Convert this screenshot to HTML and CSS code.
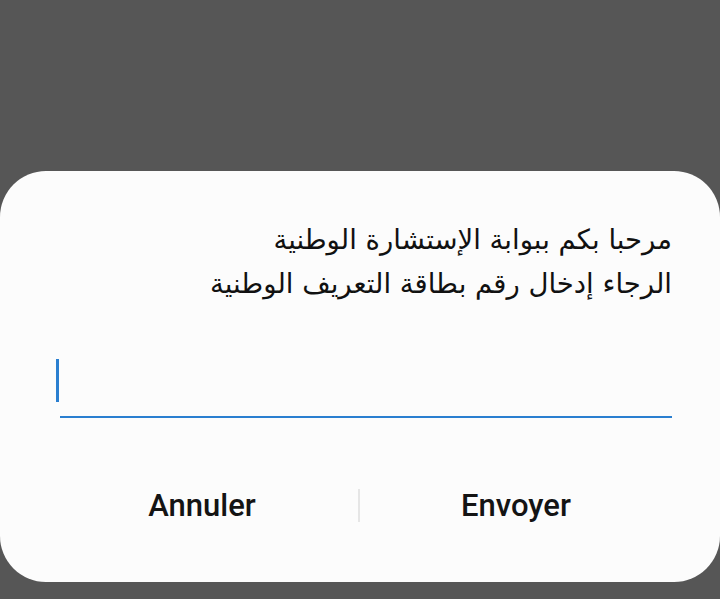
FILE: index.html
```html
<!DOCTYPE html>
<html lang="fr">
<head>
  <meta charset="UTF-8" />
  <title>Portail</title>
  <link rel="stylesheet" href="styles.css">
</head>
<body>
  <div class="dialog">
    <div class="message" dir="rtl" lang="ar">
      <div>مرحبا بكم ببوابة الإستشارة الوطنية</div>
      <div>الرجاء إدخال رقم بطاقة التعريف الوطنية</div>
    </div>
    <div class="field">
      <span class="caret"></span>
    </div>
    <div class="actions">
      <button class="btn">Annuler</button>
      <span class="sep"></span>
      <button class="btn">Envoyer</button>
    </div>
  </div>
</body>
</html>
```

FILE: styles.css
```css
html, body { margin: 0; height: 100%; }
body { background: #565656; font-family: "DejaVu Sans", sans-serif; overflow: hidden; }

.dialog {
  margin-top: 171px;
  height: 411px;
  background: #fcfcfc;
  border-radius: 46px;
  box-sizing: border-box;
  padding: 46px 48px 0 60px;
}

.message {
  font-size: 27.5px;
  line-height: 44px;
  color: #111;
  text-align: right;
}

.field {
  margin-top: 51px;
  height: 62px;
  border-bottom: 2px solid #2a7fd0;
  box-sizing: border-box;
  padding-top: 3px;
}
.caret {
  display: block;
  width: 3px;
  height: 43px;
  margin-left: -4px;
  background: #2a7fd0;
}

.actions {
  display: flex;
  align-items: center;
  margin-top: 67px;
  margin-left: -14px;
}
.btn {
  flex: 1;
  border: none;
  background: none;
  font-family: Roboto, sans-serif;
  font-weight: 500;
  font-size: 31px;
  color: #141414;
  padding: 0;
  height: 40px;
}
.sep {
  width: 2px;
  height: 33px;
  background: #e6e6e6;
}
```
